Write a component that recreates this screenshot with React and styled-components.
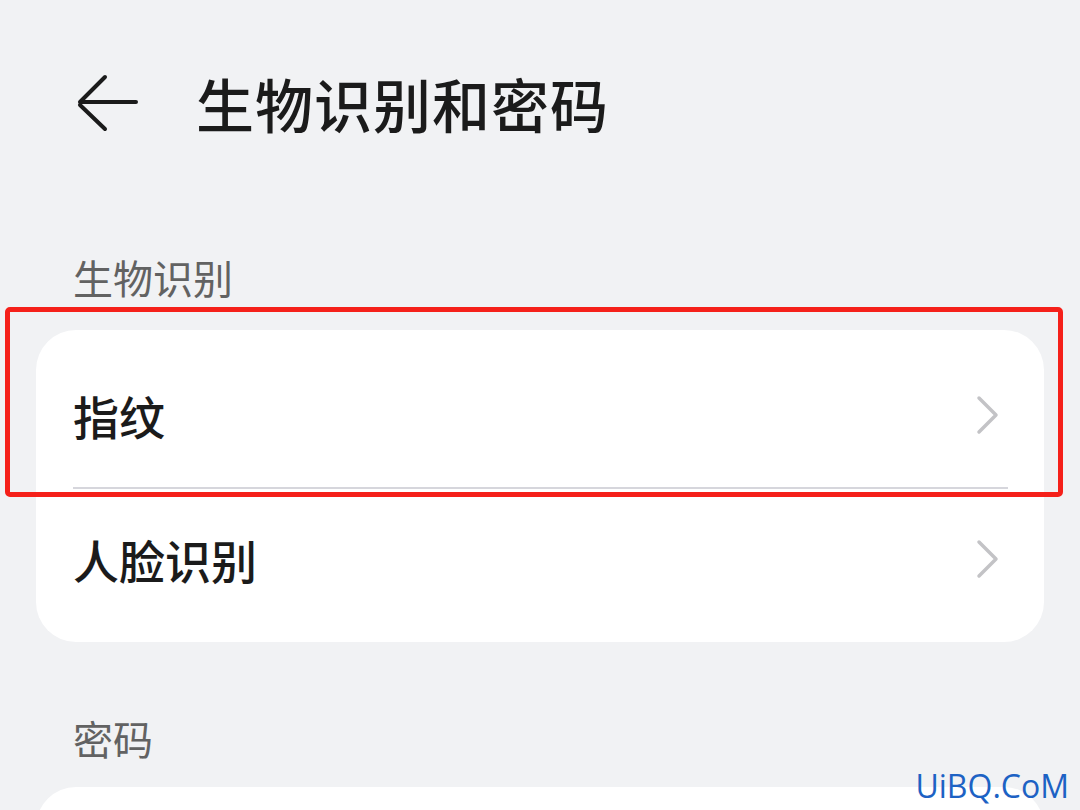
import { createGlobalStyle, styled } from "styled-components";

const GlobalStyle = createGlobalStyle`
  html, body {
    margin: 0;
    padding: 0;
    background: #f1f2f4;
  }
  body {
    font-family: "Noto Sans CJK SC", "Noto Sans", sans-serif;
    overflow: hidden;
  }
`;

const Page = styled.div`
  position: relative;
  width: 1080px;
  height: 810px;
  overflow: hidden;
  background: #f1f2f4;
  display: flex;
  flex-direction: column;
  & > * {
    flex-shrink: 0;
  }
`;

const Header = styled.header`
  height: 206px;
  display: flex;
  align-items: center;
  padding-left: 76px;
  gap: 58px;
  box-sizing: border-box;
`;

const BackButton = styled.button`
  border: none;
  background: none;
  padding: 0;
  width: 62px;
  height: 58px;
  display: flex;
  align-items: center;
  justify-content: center;
`;

const Title = styled.h1`
  margin: 0;
  font-size: 58px;
  line-height: 64px;
  font-weight: 500;
  color: #1b1b1b;
  letter-spacing: 1px;
`;

const SectionLabel = styled.div`
  margin: ${(p) => p.$top}px 0 0 73px;
  font-size: 40px;
  line-height: 48px;
  color: #626262;
  font-weight: 400;
`;

const CardWrap = styled.div`
  position: relative;
  margin: ${(p) => p.$top}px 36px 0 36px;
`;

const Card = styled.div`
  background: #ffffff;
  border-radius: 40px;
  overflow: hidden;
  min-height: ${(p) => p.$minHeight || 0}px;
`;

const Row = styled.div`
  height: ${(p) => p.$height}px;
  padding: ${(p) => p.$padTop || 0}px 44px ${(p) => p.$padBottom || 0}px 37px;
  display: flex;
  align-items: center;
  justify-content: space-between;
  box-sizing: border-box;
  font-size: 46px;
  font-weight: 500;
  color: #1b1b1b;
`;

const Divider = styled.div`
  height: 1.5px;
  margin: 0 36px 0 37px;
  background: #d6d6dc;
`;

const Highlight = styled.div`
  position: absolute;
  left: -31px;
  top: -23px;
  width: 1058px;
  height: 190px;
  box-sizing: border-box;
  border: 5px solid #f5201a;
  border-radius: 5px;
  pointer-events: none;
`;

const Watermark = styled.div`
  position: absolute;
  right: 11px;
  bottom: 4px;
  font-family: "Open Sans", "Noto Sans", sans-serif;
  font-size: 32px;
  line-height: 40px;
  color: #1d62c4;
`;

function BackArrow() {
  return (
    <svg width="62" height="58" viewBox="0 0 62 58" fill="none">
      <path
        d="M29 3 L4 28 L60 28 M4 31 L29 55"
        stroke="#1b1b1b"
        strokeWidth="4"
        strokeLinecap="round"
        strokeLinejoin="round"
      />
    </svg>
  );
}

function Chevron() {
  return (
    <svg width="24" height="40" viewBox="0 0 24 40" fill="none">
      <path
        d="M3 3 L20 20 L3 37"
        stroke="#c3c3c6"
        strokeWidth="3.5"
        strokeLinecap="round"
        strokeLinejoin="round"
      />
    </svg>
  );
}

export default function App() {
  return (
    <>
      <GlobalStyle />
      <Page>
        <Header>
          <BackButton type="button">
            <BackArrow />
          </BackButton>
          <Title>生物识别和密码</Title>
        </Header>

        <SectionLabel $top={47}>生物识别</SectionLabel>
        <CardWrap $top={29}>
          <Card>
            <Row $height={157} $padTop={13}>
              指纹
              <Chevron />
            </Row>
            <Divider />
            <Row $height={153} $padBottom={12}>
              人脸识别
              <Chevron />
            </Row>
          </Card>
          <Highlight />
        </CardWrap>

        <SectionLabel $top={72}>密码</SectionLabel>
        <CardWrap $top={25}>
          <Card $minHeight={155} />
        </CardWrap>

        <Watermark>UiBQ.CoM</Watermark>
      </Page>
    </>
  );
}
